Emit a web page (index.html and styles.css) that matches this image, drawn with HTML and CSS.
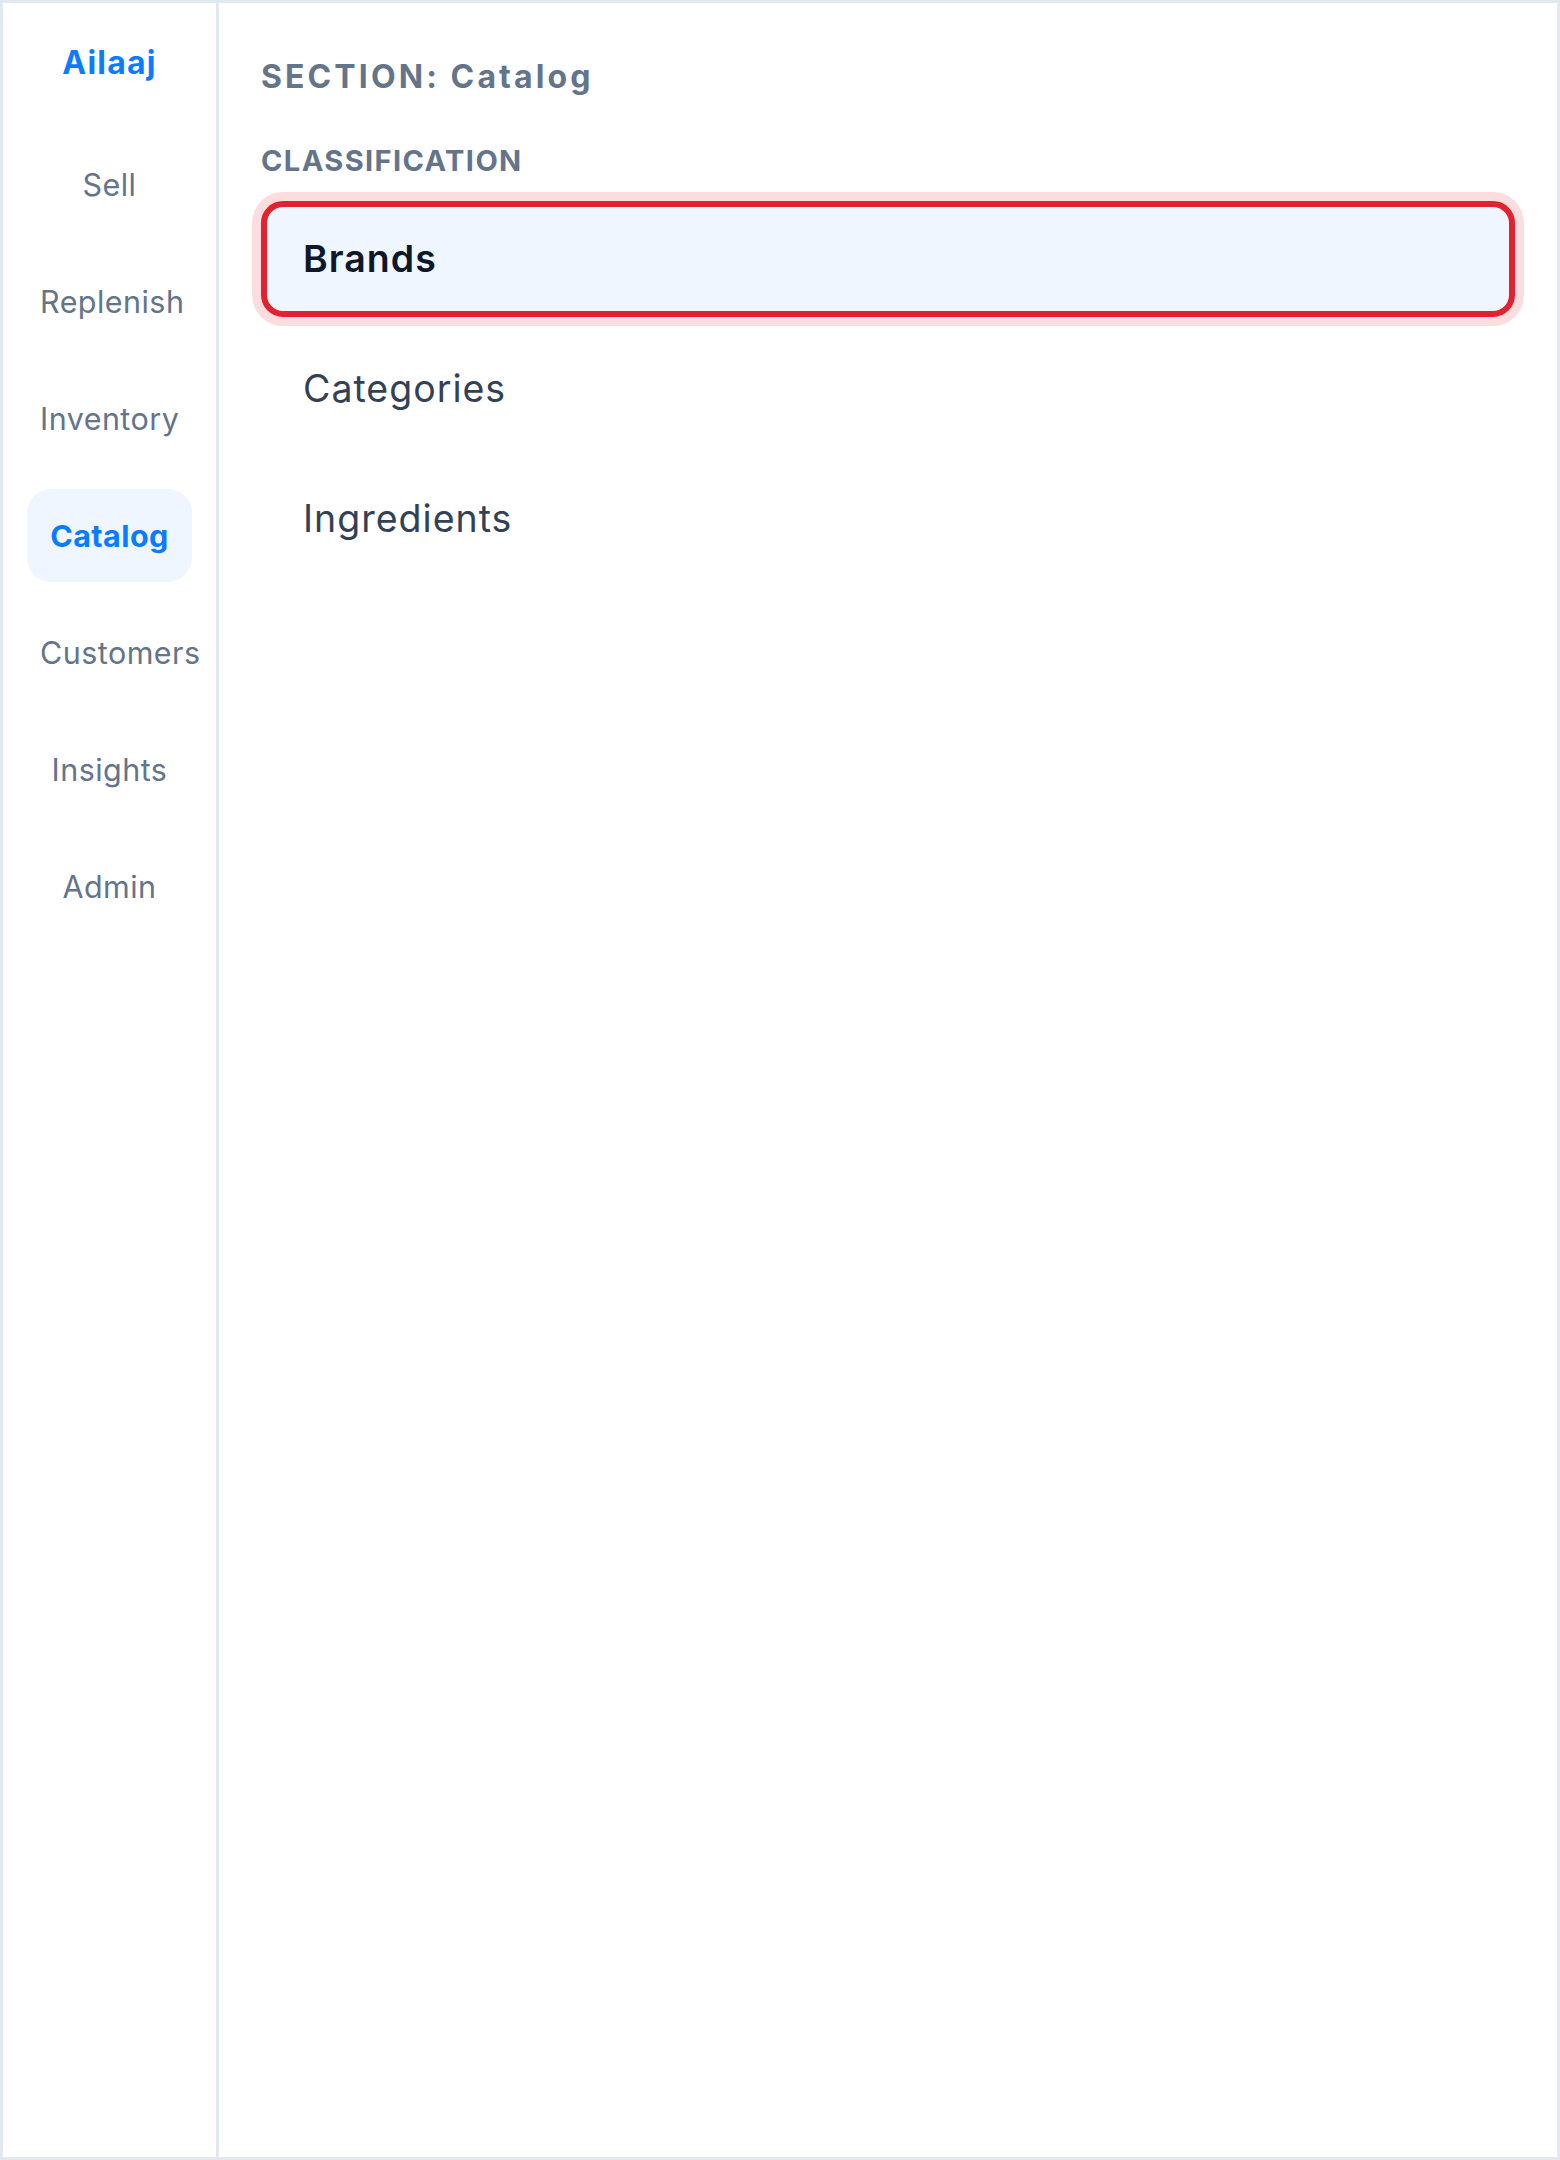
FILE: index.html
```html
<!DOCTYPE html>
<html lang="en">
<head>
    <meta charset="UTF-8">
    <meta name="viewport" content="width=device-width, initial-scale=1.0">
    <title>Ailaaj - Catalog</title>
    <link rel="stylesheet" href="styles.css">
</head>
<body>

<div class="app">
    <nav class="sidebar">
        <div class="brand">Ailaaj</div>
        <a href="#" class="nav-item">Sell</a>
        <a href="#" class="nav-item">Replenish</a>
        <a href="#" class="nav-item">Inventory</a>
        <a href="#" class="nav-item active">Catalog</a>
        <a href="#" class="nav-item">Customers</a>
        <a href="#" class="nav-item">Insights</a>
        <a href="#" class="nav-item">Admin</a>
    </nav>

    <main class="content">
        <h1 class="section-title">SECTION: Catalog</h1>
        <h2 class="group-title">CLASSIFICATION</h2>
        <div class="item-list">
            <a href="#" class="list-item selected">Brands</a>
            <a href="#" class="list-item">Categories</a>
            <a href="#" class="list-item">Ingredients</a>
        </div>
    </main>
</div>

</body>
</html>
```

FILE: styles.css
```css
* {
    box-sizing: border-box;
}
body {
    margin: 0;
    padding: 0;
    font-family: Inter, "Noto Sans", sans-serif;
    background-color: #ffffff;
}
.app {
    display: flex;
    height: 100vh;
    border: 3px solid #e2e8f0;
}
.sidebar {
    width: 216px;
    flex-shrink: 0;
    display: flex;
    flex-direction: column;
    gap: 24px;
    padding: 36px 24px;
    border-right: 3px solid #e2e8f0;
}
.brand {
    font-size: 32px;
    line-height: 48px;
    font-weight: 700;
    letter-spacing: 1.2px;
    color: #0b7cff;
    text-align: center;
    margin-bottom: 27px;
}
.nav-item {
    display: block;
    height: 93px;
    line-height: 93px;
    padding: 0 13px;
    font-size: 30.5px;
    letter-spacing: 0.45px;
    color: #64748b;
    text-align: center;
    white-space: nowrap;
    text-decoration: none;
    border-radius: 24px;
}
.nav-item.active {
    background-color: #eff6ff;
    color: #0b7cff;
    font-weight: 700;
}
.content {
    flex: 1;
    padding: 54px 42px;
}
.section-title {
    margin: 0;
    font-size: 32px;
    line-height: 40px;
    font-weight: 700;
    letter-spacing: 3.1px;
    color: #64748b;
}
.group-title {
    margin: 46px 0 22px;
    font-size: 29px;
    line-height: 36px;
    font-weight: 700;
    letter-spacing: 1.4px;
    color: #64748b;
}
.item-list {
    display: flex;
    flex-direction: column;
    gap: 14px;
}
.list-item {
    display: block;
    height: 116px;
    line-height: 104px;
    padding: 0 36px;
    font-size: 37.5px;
    letter-spacing: 1px;
    color: #334155;
    text-decoration: none;
    border: 6px solid transparent;
    border-radius: 22px;
}
.list-item.selected {
    background-color: #eff6ff;
    border-color: #e3222f;
    box-shadow: 0 0 0 9px #fbdde0;
    color: #0f172a;
    font-weight: 600;
}
```
